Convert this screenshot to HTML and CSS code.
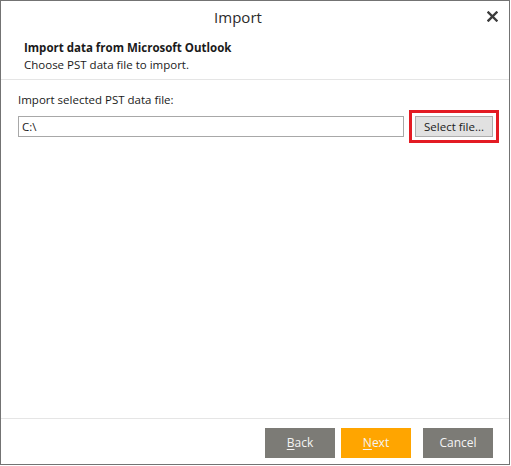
FILE: index.html
```html
<!DOCTYPE html>
<html>
<head>
<meta charset="utf-8">
<link rel="stylesheet" href="styles.css">
</head>
<body>
<div class="window">
  <div class="titlebar">
    <span class="title">Import</span>
    <span class="close" aria-label="Close">
      <svg width="11" height="11" viewBox="0 0 11 11"><path d="M1.5 1.5 L9.5 9.5 M9.5 1.5 L1.5 9.5" stroke="#3c3c3c" stroke-width="2.4" stroke-linecap="square"/></svg>
    </span>
  </div>
  <div class="header">
    <div class="h-title">Import data from Microsoft Outlook</div>
    <div class="h-sub">Choose PST data file to import.</div>
  </div>
  <div class="content">
    <div class="label">Import selected PST data file:</div>
    <div class="file-row">
      <div class="input">C:\</div>
      <div class="select-btn">Select file...</div>
    </div>
  </div>
  <div class="footer">
    <div class="btn gray"><u>B</u>ack</div>
    <div class="btn orange"><u>N</u>ext</div>
    <div class="btn gray cancel">Cancel</div>
  </div>
</div>
</body>
</html>
```
FILE: styles.css
```css
html, body {
  margin: 0;
  padding: 0;
  background: #ffffff;
}
body {
  font-family: "Open Sans", "Noto Sans", sans-serif;
  font-size: 11.5px;
  color: #1a1a1a;
}
.window {
  box-sizing: border-box;
  width: 510px;
  height: 465px;
  border: 1px solid #737373;
  display: flex;
  flex-direction: column;
  background: #fff;
}
.titlebar {
  position: relative;
  height: 34px;
  display: flex;
  align-items: center;
  justify-content: center;
  padding-right: 34px;
}
.title {
  font-size: 15px;
  color: #2b2b2b;
  padding-bottom: 3px;
}
.close {
  position: absolute;
  right: 11px;
  top: 10px;
  width: 11px;
  height: 11px;
  display: flex;
}
.header {
  padding: 4px 23px 6px;
  border-bottom: 1px solid #e5e5e5;
}
.h-title, .h-sub {
  line-height: 17px;
}
.h-title {
  font-weight: 700;
}
.content {
  flex: 1;
  padding: 12px 16px 0 17px;
}
.label {
  line-height: 16px;
  margin-bottom: 8px;
}
.file-row {
  display: flex;
  gap: 11px;
  align-items: center;
}
.input {
  flex: 1;
  box-sizing: border-box;
  height: 21px;
  border: 1px solid #a8a8a8;
  padding: 0 3px;
  line-height: 19px;
}
.select-btn {
  box-sizing: border-box;
  flex: 0 0 78px;
  height: 21px;
  background: #e1e1e1;
  border: 1px solid #adadad;
  text-align: center;
  line-height: 19px;
  outline: 3px solid #e31b23;
  outline-offset: 3px;
}
.footer {
  border-top: 1px solid #e5e5e5;
  padding: 9px 16px 6px 0;
  display: flex;
  justify-content: flex-end;
  gap: 6px;
}
.btn {
  width: 70px;
  height: 30px;
  line-height: 30px;
  text-align: center;
  color: #f4f4f4;
  font-size: 12px;
}
.btn u {
  text-underline-offset: 2px;
}
.gray {
  background: #7c7b76;
}
.orange {
  background: #ffa500;
}
.cancel {
  margin-left: 6px;
}
```
